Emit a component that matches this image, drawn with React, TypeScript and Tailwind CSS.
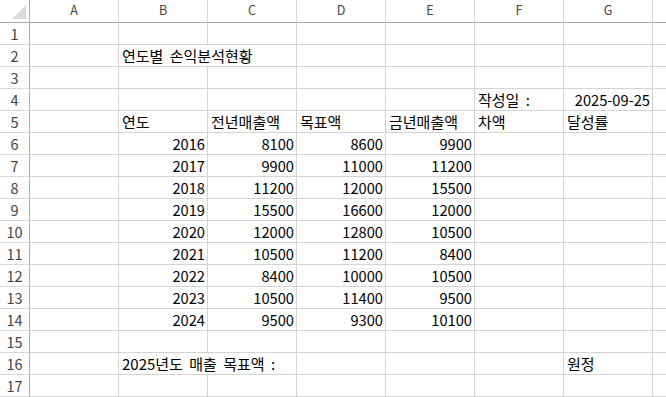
import React from "react";

type Cell = { t?: string; right?: boolean; span?: number };

const COLS = ["A", "B", "C", "D", "E", "F", "G"];

const data: [string, string, string, string][] = [
  ["2016", "8100", "8600", "9900"],
  ["2017", "9900", "11000", "11200"],
  ["2018", "11200", "12000", "15500"],
  ["2019", "15500", "16600", "12000"],
  ["2020", "12000", "12800", "10500"],
  ["2021", "10500", "11200", "8400"],
  ["2022", "8400", "10000", "10500"],
  ["2023", "10500", "11400", "9500"],
  ["2024", "9500", "9300", "10100"],
];

function buildRows(): Cell[][] {
  const rows: Cell[][] = [];
  for (let r = 1; r <= 17; r++) {
    let cells: Cell[] = [{}, {}, {}, {}, {}, {}, {}, {}];
    if (r === 2) {
      cells = [{}, { t: "연도별 손익분석현황", span: 2 }, {}, {}, {}, {}, {}];
    } else if (r === 4) {
      cells = [{}, {}, {}, {}, {}, { t: "작성일 :" }, { t: "2025-09-25", right: true }, {}];
    } else if (r === 5) {
      cells = [
        {},
        { t: "연도" },
        { t: "전년매출액" },
        { t: "목표액" },
        { t: "금년매출액" },
        { t: "차액" },
        { t: "달성률" },
        {},
      ];
    } else if (r >= 6 && r <= 14) {
      const d = data[r - 6];
      cells = [
        {},
        { t: d[0], right: true },
        { t: d[1], right: true },
        { t: d[2], right: true },
        { t: d[3], right: true },
        {},
        {},
        {},
      ];
    } else if (r === 16) {
      cells = [{}, { t: "2025년도 매출 목표액 :", span: 2 }, {}, {}, {}, { t: "원정" }, {}];
    }
    rows.push(cells);
  }
  return rows;
}

export default function App() {
  const rows = buildRows();
  return (
    <div
      className="w-[666px] h-[397px] overflow-hidden bg-white text-black"
      style={{ fontFamily: '"Noto Sans CJK KR", "Noto Sans", sans-serif' }}
    >
      <div className="grid grid-cols-[30px_repeat(7,89px)_1fr] grid-rows-[23px_repeat(17,22px)]">
        {/* corner */}
        <div className="relative border-r border-b border-r-[#ababab] border-b-[#ababab] bg-white">
          <svg className="absolute left-[12px] top-[5px]" width="15" height="15" viewBox="0 0 15 15">
            <polygon points="14,0 14,14 0,14" fill="#dadada" />
          </svg>
        </div>
        {COLS.map((c) => (
          <div
            key={c}
            className="flex items-start justify-center border-r border-b border-r-[#d8d8d8] border-b-[#ababab] bg-white text-[12.5px] leading-[19px] text-[#444]"
          >
            {c}
          </div>
        ))}
        <div className="border-b border-b-[#ababab] bg-white" />

        {rows.map((cells, i) => (
          <React.Fragment key={i}>
            <div className="flex items-start justify-center border-r border-b border-r-[#ababab] border-b-[#d8d8d8] bg-white text-[14.5px] leading-[21px] text-[#444]">
              {i + 1}
            </div>
            {cells.map((cell, j) => {
              const last = j === cells.length - 1;
              return (
                <div
                  key={j}
                  className={`flex items-start overflow-hidden whitespace-nowrap border-b border-[#d4d4d4] pl-[3px] pr-[2px] leading-[21px] [word-spacing:3px] ${
                    last ? "" : "border-r"
                  } ${cell.span === 2 ? "col-span-2" : ""} ${
                    cell.right ? "justify-end text-[14.67px]" : "justify-start text-[15px]"
                  }`}
                >
                  {cell.t}
                </div>
              );
            })}
          </React.Fragment>
        ))}
      </div>
    </div>
  );
}
